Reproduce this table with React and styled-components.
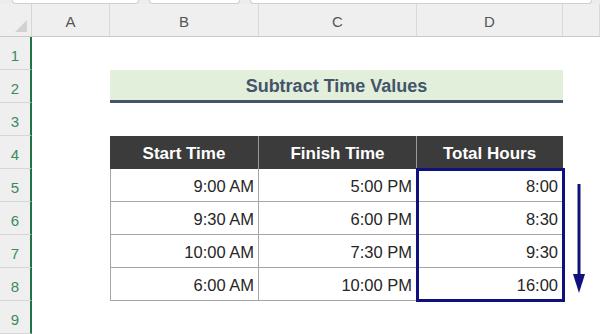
import React from 'react';
import styled, { createGlobalStyle } from 'styled-components';

const Global = createGlobalStyle`
  html, body { margin: 0; padding: 0; background: #fff; }
  body { font-family: "Liberation Sans", Arial, sans-serif; overflow: hidden; }
`;

const columns = ['A', 'B', 'C', 'D', ''];
const rows = [1, 2, 3, 4, 5, 6, 7, 8, 9];

const data = [
  ['9:00 AM', '5:00 PM', '8:00'],
  ['9:30 AM', '6:00 PM', '8:30'],
  ['10:00 AM', '7:30 PM', '9:30'],
  ['6:00 AM', '10:00 PM', '16:00'],
];

const Sheet = styled.div`
  display: grid;
  grid-template-columns: 32px 78px 149px 158px 146px 1fr;
  grid-template-rows: 4px 33px repeat(9, 33px);
  width: 600px;
  height: 334px;
  overflow: hidden;
  background: #fff;
`;

const TopStrip = styled.div`
  grid-column: 1 / -1;
  grid-row: 1;
  display: flex;
  gap: 10px;
  padding-left: 12px;
  background: #ececec;
`;

const Tab = styled.div`
  width: ${p => p.w}px;
  height: 3px;
  background: #fff;
  border: 1px solid #cfcfcf;
  border-top: none;
  border-radius: 0 0 4px 4px;
`;

const Corner = styled.div`
  grid-column: 1;
  grid-row: 2;
  background: #efefef;
  border-bottom: 1px solid #c9c9c9;
  border-right: 1px solid #d6d6d6;
  box-sizing: border-box;
  display: flex;
  align-items: flex-end;
  justify-content: flex-end;
  padding: 0 4px 4px 0;
`;

const Triangle = styled.div`
  width: 0;
  height: 0;
  border-left: 12px solid transparent;
  border-bottom: 12px solid #d2d2d2;
`;

const ColHead = styled.div`
  grid-row: 2;
  background: #efefef;
  border-bottom: 1px solid #c9c9c9;
  border-right: 1px solid #d9d9d9;
  box-sizing: border-box;
  display: flex;
  align-items: center;
  justify-content: center;
  color: #555;
  font-size: 15px;
  padding-top: 2px;
`;

const RowHead = styled.div`
  grid-column: 1;
  background: #efefef;
  border-bottom: 1px solid #d6d6d6;
  border-right: 2px solid #217346;
  box-sizing: border-box;
  display: flex;
  align-items: center;
  justify-content: center;
  color: #3a8a5e;
  font-size: 15px;
  padding-top: 4px;
`;

const Title = styled.div`
  grid-column: 3 / 6;
  grid-row: 4;
  background: #e2efda;
  border-bottom: 3px solid #44546a;
  box-sizing: border-box;
  display: flex;
  align-items: center;
  justify-content: center;
  color: #44546a;
  font-weight: bold;
  font-size: 18px;
  padding-top: 2px;
`;

const Table = styled.div`
  grid-column: 3 / 6;
  grid-row: 6 / 11;
  display: grid;
  grid-template-columns: 149px 158px 146px;
  grid-template-rows: repeat(5, 33px);
`;

const HeadCell = styled.div`
  background: #3b3b3b;
  color: #fff;
  font-weight: bold;
  font-size: 17px;
  display: flex;
  align-items: center;
  justify-content: center;
  box-sizing: border-box;
  border-right: 1px solid ${p => (p.last ? '#3b3b3b' : '#9a9a9a')};
  padding-top: 2px;
`;

const Cell = styled.div`
  box-sizing: border-box;
  border-bottom: 1px solid #a6a6a6;
  border-right: 1px solid #a6a6a6;
  border-left: ${p => (p.first ? '1px solid #a6a6a6' : 'none')};
  display: flex;
  align-items: center;
  justify-content: flex-end;
  padding: 3px 4px 0 0;
  color: #262626;
  font-size: 16.5px;
`;

const Highlight = styled.div`
  grid-column: 5;
  grid-row: 7 / 11;
  margin: -1px -2px -1px -1px;
  border: 3px solid #10107f;
  pointer-events: none;
  z-index: 2;
`;

const ArrowBox = styled.div`
  grid-column: 6;
  grid-row: 7 / 11;
`;

export default function App() {
  return (
    <>
      <Global />
      <Sheet>
        <TopStrip>
          <Tab w={125} />
          <Tab w={89} />
          <Tab w={340} />
        </TopStrip>
        <Corner>
          <Triangle />
        </Corner>
        {columns.map((c, i) => (
          <ColHead key={i} style={{ gridColumn: i + 2 }}>{c}</ColHead>
        ))}
        {rows.map(r => (
          <RowHead key={r} style={{ gridRow: r + 2 }}>{r}</RowHead>
        ))}
        <Title>Subtract Time Values</Title>
        <Table>
          <HeadCell>Start Time</HeadCell>
          <HeadCell>Finish Time</HeadCell>
          <HeadCell last>Total Hours</HeadCell>
          {data.map((row, ri) =>
            row.map((v, ci) => (
              <Cell key={ri + '-' + ci} first={ci === 0}>{v}</Cell>
            ))
          )}
        </Table>
        <Highlight />
        <ArrowBox>
          <svg width="30" height="134" viewBox="0 0 30 134">
            <line x1="16" y1="15" x2="16" y2="110" stroke="#10107f" strokeWidth="3" />
            <polygon points="10,105 22,105 16,124" fill="#10107f" />
          </svg>
        </ArrowBox>
      </Sheet>
    </>
  );
}
